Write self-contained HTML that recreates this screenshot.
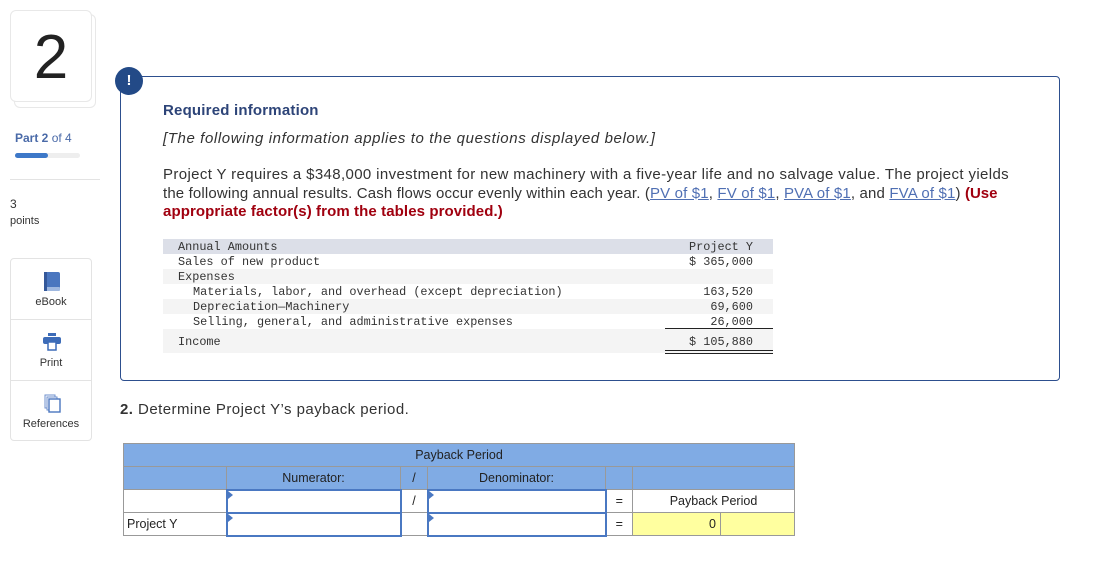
<!DOCTYPE html>
<html><head><meta charset="utf-8"><style>
*{box-sizing:border-box;margin:0;padding:0}
body{width:1096px;height:587px;background:#fff;font-family:"Liberation Sans",sans-serif;position:relative;overflow:hidden;color:#222}
.abs{position:absolute}
.card{left:10px;top:10px;width:82px;height:92px;border:1px solid #e8e8e8;border-radius:6px;background:#fff}
.card2{left:14px;top:14px;width:82px;height:94px;border:1px solid #e8e8e8;border-radius:6px;background:#fff}
.big{left:10px;top:18px;width:82px;text-align:center;font-size:62px;color:#222;line-height:80px}
.btns{left:10px;top:258px;width:82px;height:183px;border:1px solid #e3e3e3;border-radius:4px}
.btn{height:61px;border-bottom:1px solid #e3e3e3;text-align:center;font-size:11px;color:#333;position:relative}
.btn:last-child{border-bottom:none}
.btn span{position:absolute;left:0;right:0;top:37px}
.box{left:120px;top:76px;width:940px;height:305px;border:1px solid #2d4f8e;border-radius:4px}
.circ{left:115px;top:67px;width:28px;height:28px;border-radius:50%;background:#234a87;color:#fff;font-weight:bold;font-size:15px;text-align:center;line-height:28px}
.t{left:163px;font-size:15px;letter-spacing:0.37px;color:#333;white-space:nowrap}
a{color:#4f6fb3;text-decoration:underline}
.mono{font-family:"Liberation Mono",monospace;font-size:11.85px;color:#333;white-space:pre}
.row{position:absolute;left:163px;width:610px;height:15px;line-height:17px}
.row .l{position:absolute;left:15px}
.row .r{position:absolute;right:20px}
table.pb{position:absolute;left:123px;top:443px;border-collapse:collapse;font-size:12.5px;color:#222}
table.pb td{border:1px solid #999;height:23px;text-align:center;padding:0}
.hd{background:#80abe4}
.in{border:2px solid #4a78c2 !important;position:relative}
.in:before{content:"";position:absolute;left:0;top:0;border-left:5px solid #4a78c2;border-top:4px solid transparent;border-bottom:4px solid transparent}
.yl{background:#ffff9f}
</style></head><body>
<div class="abs card2"></div><div class="abs card"></div>
<div class="abs big">2</div>
<div class="abs" style="left:15px;top:131px;font-size:12px;color:#4a6aa8"><b>Part 2</b> of 4</div>
<div class="abs" style="left:15px;top:153px;width:65px;height:5px;border-radius:3px;background:#eee"></div>
<div class="abs" style="left:15px;top:153px;width:33px;height:5px;border-radius:3px;background:#3d78c8"></div>
<div class="abs" style="left:10px;top:179px;width:90px;height:1px;background:#e3e3e3"></div>
<div class="abs" style="left:10px;top:196px;font-size:12px;color:#333;line-height:16px">3<br><span style="font-size:11px">points</span></div>
<div class="abs btns">
<div class="btn"><svg style="position:absolute;left:32px;top:13px" width="18" height="20"><rect x="1" y="0" width="16" height="17" rx="2" fill="#4a76bf"/><rect x="1" y="15" width="16" height="4" rx="1" fill="#9fb8e0"/><rect x="1" y="0" width="3" height="19" fill="#34589a"/></svg><span>eBook</span></div>
<div class="btn"><svg style="position:absolute;left:32px;top:13px" width="18" height="18"><rect x="5" y="0" width="8" height="3" fill="#3d6cb8"/><rect x="0" y="4" width="18" height="7" rx="2" fill="#3d6cb8"/><rect x="5" y="9" width="8" height="8" fill="#fff" stroke="#3d6cb8" stroke-width="1.5"/></svg><span>Print</span></div>
<div class="btn"><svg style="position:absolute;left:33px;top:13px" width="18" height="20"><rect x="1" y="1" width="10" height="13" fill="#fff" stroke="#6e8fcc"/><rect x="3" y="3" width="10" height="13" fill="#fff" stroke="#6e8fcc"/><rect x="5" y="5" width="11" height="13" fill="#fff" stroke="#4a76bf" stroke-width="1.4"/></svg><span>References</span></div>
</div>
<div class="abs box"></div>
<div class="abs circ">!</div>
<div class="abs t" style="top:102px;font-weight:bold;color:#2d4478;letter-spacing:0.2px">Required information</div>
<div class="abs t" style="top:130px;font-style:italic;letter-spacing:0.6px">[The following information applies to the questions displayed below.]</div>
<div class="abs t" style="top:166px;line-height:18.5px">Project Y requires a $348,000 investment for new machinery with a five-year life and no salvage value. The project yields<br><span style="letter-spacing:0.15px">the following annual results. Cash flows occur evenly within each year. (<a>PV of $1</a>, <a>FV of $1</a>, <a>PVA of $1</a>, and <a>FVA of $1</a>) <b style="color:#a0000f;letter-spacing:0">(Use</b></span><br><b style="color:#a0000f;letter-spacing:0.1px">appropriate factor(s) from the tables provided.)</b></div>
<div class="mono">
<div class="row" style="top:239px;background:#dcdfe8"><span class="l">Annual Amounts</span><span class="r">Project Y</span></div>
<div class="row" style="top:254px"><span class="l">Sales of new product</span><span class="r">$ 365,000</span></div>
<div class="row" style="top:269px;background:#f4f4f4"><span class="l">Expenses</span></div>
<div class="row" style="top:284px"><span class="l" style="left:30px">Materials, labor, and overhead (except depreciation)</span><span class="r">163,520</span></div>
<div class="row" style="top:299px;background:#f4f4f4"><span class="l" style="left:30px">Depreciation—Machinery</span><span class="r">69,600</span></div>
<div class="row" style="top:314px"><span class="l" style="left:30px">Selling, general, and administrative expenses</span><span class="r">26,000</span></div>
<div class="row" style="top:329px;height:24px;line-height:26px;background:#f4f4f4"><span class="l">Income</span><span class="r">$ 105,880</span></div>
</div>
<div class="abs" style="left:665px;top:328px;width:108px;height:1px;background:#222"></div>
<div class="abs" style="left:665px;top:350px;width:108px;height:4px;border-top:1px solid #222;border-bottom:1px solid #222"></div>
<div class="abs" style="left:120px;top:401px;font-size:15px;letter-spacing:0.45px;color:#333"><b>2.</b> Determine Project Y’s payback period.</div>
<table class="pb">
<tr><td colspan="7" class="hd" style="width:671px">Payback Period</td></tr>
<tr><td class="hd" style="width:103px"></td><td class="hd" style="width:174px">Numerator:</td><td class="hd" style="width:27px">/</td><td class="hd" style="width:178px">Denominator:</td><td class="hd" style="width:27px"></td><td class="hd" colspan="2" style="width:162px"></td></tr>
<tr><td></td><td class="in"></td><td>/</td><td class="in"></td><td>=</td><td colspan="2">Payback Period</td></tr>
<tr><td style="text-align:left;padding-left:3px">Project Y</td><td class="in"></td><td></td><td class="in"></td><td>=</td><td class="yl" style="width:88px;text-align:right;padding-right:4px">0</td><td class="yl" style="width:74px"></td></tr>
</table>
</body></html>
